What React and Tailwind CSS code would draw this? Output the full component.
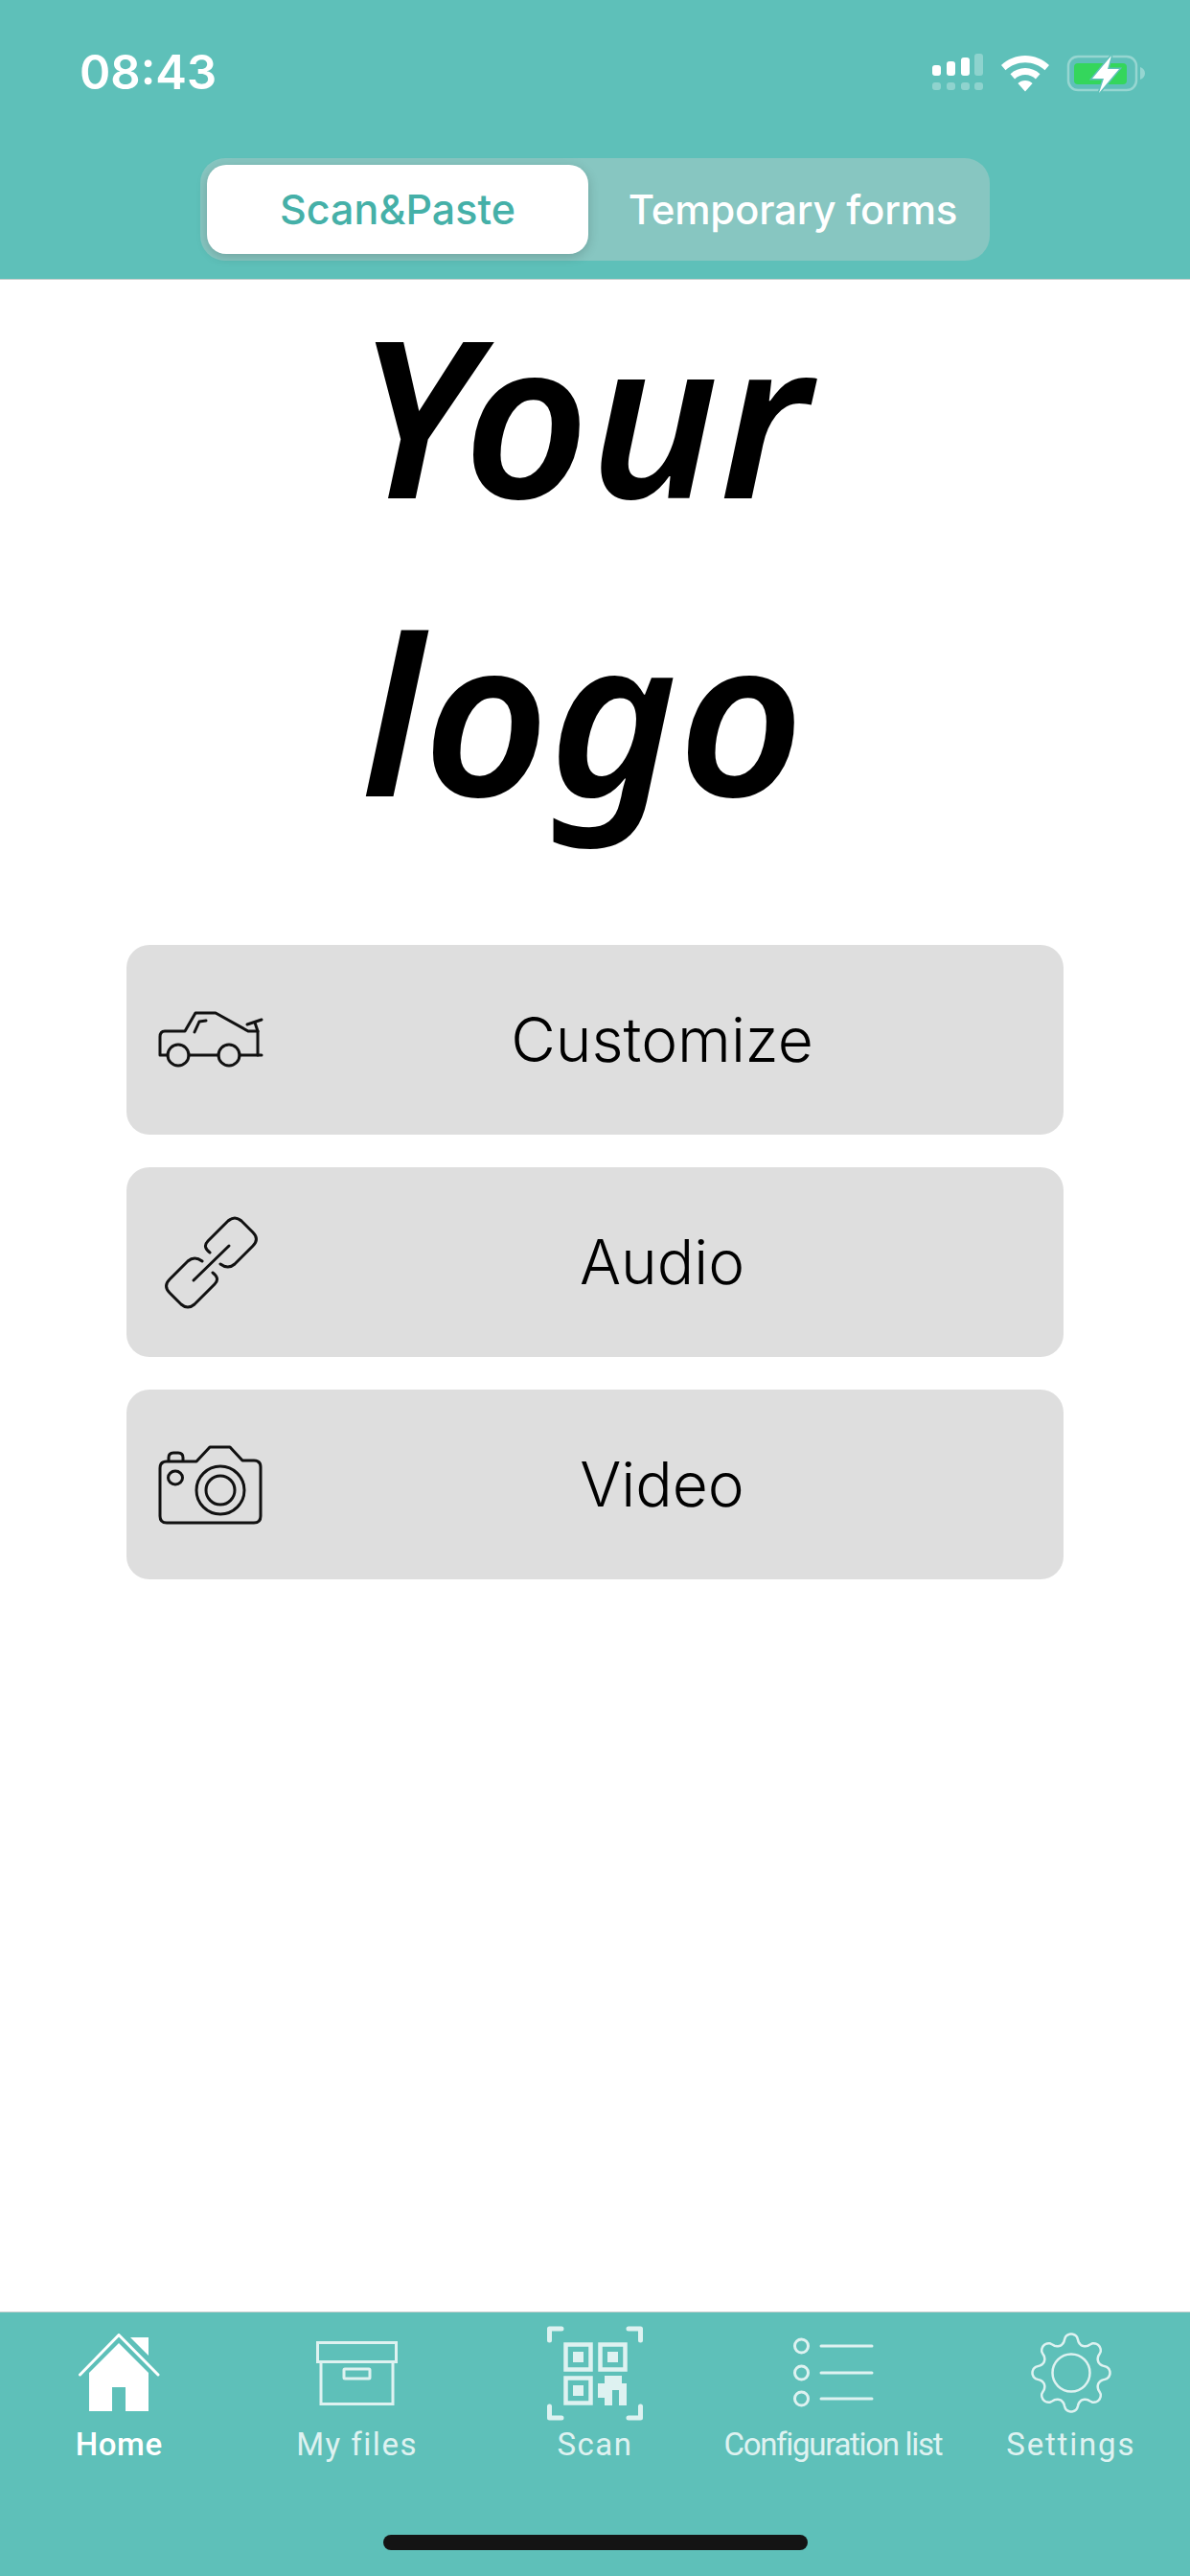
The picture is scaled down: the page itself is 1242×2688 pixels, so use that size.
import React from 'react';

const sans = "font-['Inter','Liberation_Sans',sans-serif]";

function StatusIcons(){
  return (
    <svg width="226" height="44" viewBox="970 54 226 44" fill="white">
      <rect x="973" y="67" width="9" height="11" rx="3"/>
      <rect x="988" y="63" width="9" height="15" rx="3"/>
      <rect x="1003" y="59" width="9" height="19" rx="3"/>
      <rect x="1017" y="55" width="9" height="23" rx="3" opacity=".3"/>
      <g opacity=".3">
        <rect x="973" y="85" width="9" height="8" rx="3"/>
        <rect x="988" y="85" width="9" height="8" rx="3"/>
        <rect x="1003" y="85" width="9" height="8" rx="3"/>
        <rect x="1017" y="85" width="9" height="8" rx="3"/>
      </g>
      <path d="M1070 57c-9.500 0-18.300 3.800-25 10l4.500 5.200c5.300-4.900 12.500-8 20.500-8s15.200 3.100 20.500 8l4.500-5.200c-6.700-6.200-15.500-10-25-10z"/>
      <path d="M1070 70c-6 0-11.300 2.300-15.500 6.200l4.600 5.200c2.900-2.700 6.700-4.300 10.900-4.300s8 1.600 10.900 4.300l4.600-5.200C1081.300 72.300 1076 70 1070 70z"/>
      <path d="M1070 83c-3 0-5.600 1.100-7.600 3l7.600 8.500 7.600-8.500c-2-1.900-4.600-3-7.600-3z"/>
      <rect x="1115" y="58" width="71" height="35" rx="10" fill="none" stroke="white" strokeWidth="2.500" opacity=".35"/>
      <path d="M1190 69c3 1 5 3.500 5 6.500s-2 5.500-5 6.500z" opacity=".35"/>
      <rect x="1121" y="65" width="55" height="22" rx="4" fill="#34d65c"/>
      <path d="M1160 57l-20 24h12l-5 15 21-25h-12z" stroke="#5ec0b9" strokeWidth="3" paintOrder="stroke"/>
    </svg>
  );
}

function CarIcon(){
  return (
    <svg width="110" height="60" viewBox="-2 -1 110 60" fill="none" stroke="#111" strokeWidth="3" strokeLinecap="round" strokeLinejoin="round">
      <path d="M8 45H0V26q0-6 5-6H26L37 1H58L92 20H102V45"/>
      <circle cx="19" cy="45" r="11"/>
      <path d="M30 45H61"/>
      <circle cx="72" cy="45" r="11"/>
      <path d="M83 45H106"/>
      <path d="M91 13L106 8M99 11L102 20"/>
      <path d="M36 21L41 10L48 9"/>
    </svg>
  );
}

function LinkIcon(){
  const half = "M47 38Q39 32 45 26L66 5Q73-1 80 5L92 17Q99 24 92 31L73 50Q66 56 58 50";
  return (
    <svg width="101" height="101" viewBox="-2 -2 101 101" fill="none" stroke="#111" strokeWidth="3" strokeLinecap="round">
      <path d={half}/>
      <path d={half} transform="rotate(180 48.500 48.500)"/>
      <path d="M30 67L67 31"/>
    </svg>
  );
}

function CameraIcon(){
  return (
    <svg width="110" height="85" viewBox="-2 -2 110 85" fill="none" stroke="#111" strokeWidth="3" strokeLinejoin="round">
      <path d="M7 16H38L52 1H73L86 15H98Q105 15 105 22V73Q105 80 98 80H7Q0 80 0 73V23Q0 16 7 16Z"/>
      <path d="M9 16V12Q9 7 14 7H19Q24 7 24 12V16"/>
      <ellipse cx="16" cy="33" rx="7.500" ry="7"/>
      <circle cx="63" cy="46" r="25"/>
      <circle cx="63" cy="46" r="15"/>
    </svg>
  );
}

function HomeIcon(){
  return (
    <svg width="85" height="82" viewBox="0 0 85 82" fill="white">
      <path d="M1.500 43L42 1.500L83 43" fill="none" stroke="white" strokeWidth="3" strokeLinecap="round" strokeLinejoin="round"/>
      <path d="M42 10L73 41V81H49V56H35V81H11V41Z"/>
      <path d="M54 4H73V23Z"/>
    </svg>
  );
}

function ArchiveIcon(){
  return (
    <svg width="85" height="67" viewBox="-1 -1 85 67" fill="none" stroke="white" strokeWidth="3">
      <rect x="0.500" y="0.500" width="82" height="20"/>
      <rect x="4" y="20.500" width="75" height="44"/>
      <rect x="28" y="28" width="27" height="10" rx="1"/>
    </svg>
  );
}

function ScanIcon(){
  // x, y, w, h of the filled qr blocks, bottom right
  const cells = [[60,52,18,8],[53,60,30,7],[53,67,15,8],[75,67,8,8],[60,75,8,8],[75,75,8,8]];
  return (
    <svg width="100" height="99" viewBox="0 0 100 99" fill="white">
      <g fill="none" stroke="white" strokeWidth="5" strokeLinecap="round" strokeLinejoin="round">
        <path d="M2.500 15V3H15"/>
        <path d="M2.500 84V96H15"/>
        <path d="M85 3H97.500V15"/>
        <path d="M85 96H97.500V84"/>
      </g>
      <g fill="none" stroke="white" strokeWidth="4.500">
        <rect x="19.500" y="19.500" width="26" height="26"/>
        <rect x="19.500" y="54.500" width="26" height="26"/>
        <rect x="55.500" y="19.500" width="26" height="26"/>
      </g>
      <rect x="27" y="27" width="11" height="11"/>
      <rect x="27" y="62" width="11" height="11"/>
      <rect x="63" y="27" width="11" height="11"/>
      {cells.map((c,i)=> <rect key={i} x={c[0]} y={c[1]} width={c[2]} height={c[3]}/>)}
    </svg>
  );
}

function ListIcon(){
  return (
    <svg width="85" height="75" viewBox="-1 -1 85 75" fill="none" stroke="white" strokeWidth="3" strokeLinecap="round">
      <ellipse cx="8.500" cy="8" rx="7" ry="7"/>
      <ellipse cx="8.500" cy="36" rx="7" ry="7"/>
      <ellipse cx="8.500" cy="63" rx="7" ry="7"/>
      <path d="M29 8H82M29 36H82M29 63H82"/>
    </svg>
  );
}

function GearIcon(){
  // scalloped cog, 8 teeth
  const pts = [];
  for(let i=0;i<192;i++){
    const a = i/192*Math.PI*2 - Math.PI/2;
    const w = Math.cos(8*(a+Math.PI/2));
    const r = 35.5 + 5*Math.sign(w)*Math.pow(Math.abs(w),0.6);
    pts.push((42+r*Math.cos(a)).toFixed(1)+' '+(42+r*Math.sin(a)).toFixed(1));
  }
  return (
    <svg width="84" height="84" viewBox="0 0 84 84" fill="none" stroke="white" strokeWidth="2.500">
      <path d={'M'+pts.join('L')+'Z'} strokeLinejoin="round"/>
      <circle cx="42" cy="42" r="19.500"/>
    </svg>
  );
}

const actions = [
  {label:'Customize', icon:<CarIcon/>},
  {label:'Audio', icon:<LinkIcon/>},
  {label:'Video', icon:<CameraIcon/>},
];

const tabs = [
  {label:'Home', icon:<HomeIcon/>, active:true, cls:'tracking-[0.6px] font-medium'},
  {label:'My files', icon:<ArchiveIcon/>, cls:'tracking-[1.5px]'},
  {label:'Scan', icon:<ScanIcon/>, cls:'tracking-[1.5px]'},
  {label:'Configuration list', icon:<ListIcon/>, cls:'tracking-[-1.3px]'},
  {label:'Settings', icon:<GearIcon/>, cls:'tracking-[1.8px]'},
];

export default function App(){
  return (
    <div className={"w-[1242px] h-[2688px] flex flex-col bg-white overflow-hidden "+sans}>
      <header className="h-[292px] shrink-0 bg-[#5ec0b9] border-b border-[#c9cfce] flex flex-col">
        <div className="h-[165px] shrink-0 flex justify-between pl-[83px] pr-[46px] pt-[47px]">
          <span className="text-[49px] leading-[58px] font-semibold text-white">08:43</span>
          <div className="pt-[8px]"><StatusIcons/></div>
        </div>
        <div className="ml-[209px] w-[824px] h-[107px] rounded-[26px] bg-[#87c6c1] p-[7px] flex">
          <div className="w-[398px] h-[93px] rounded-[20px] bg-white shadow-[0_3px_12px_rgba(0,0,0,0.18)] flex items-center justify-center text-[43px] font-medium text-[#45b0a8]">Scan&amp;Paste</div>
          <div className="flex-1 flex items-center justify-center pl-[15px] text-[42px] tracking-[-0.2px] font-medium text-white">Temporary forms</div>
        </div>
      </header>

      <main className="flex-1 flex flex-col items-center">
        <h1 className="font-['Noto_Sans',sans-serif] italic font-[650] text-black text-[228px] leading-[311px] text-center mt-[-16px] mb-0 w-[800px] pr-[26px]">Your<br/>logo</h1>
        <div className="w-[978px] flex flex-col gap-[34px] mt-[88px]">
          {actions.map(a=>(
            <div key={a.label} className="relative h-[198px] rounded-[24px] bg-[#dedede] flex items-center justify-center pl-[140px]">
              <div className="absolute left-[33px] w-[110px] flex justify-center">{a.icon}</div>
              <span className="text-[64px] font-light text-black">{a.label}</span>
            </div>
          ))}
        </div>
      </main>

      <nav className="h-[276px] shrink-0 bg-[#5ec0b9] border-t border-[#c9cfce] relative">
        <div className="grid grid-cols-5 h-[138px] pt-[13px]">
          {tabs.map(t=>(
            <div key={t.label} className={"flex flex-col items-center "+(t.active?'opacity-100':'opacity-80')}>
              <div className="h-[100px] flex items-center justify-center">{t.icon}</div>
              <span className={"font-['Roboto',sans-serif] text-[33px] leading-[40px] mt-[5px] whitespace-nowrap text-white "+t.cls}>{t.label}</span>
            </div>
          ))}
        </div>
        <div className="absolute left-[400px] bottom-[27px] w-[443px] h-[16px] rounded-full bg-[#141414]"></div>
      </nav>
    </div>
  );
}
